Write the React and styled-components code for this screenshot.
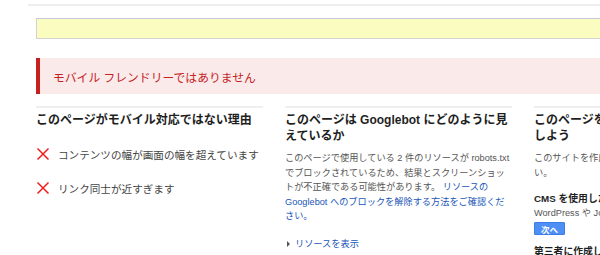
import React from "react";
import styled, { createGlobalStyle } from "styled-components";

const GlobalStyle = createGlobalStyle`
  html, body {
    margin: 0;
    padding: 0;
    overflow: hidden;
    background: #fff;
  }
  body {
    font-family: "Liberation Sans", Arial, "Noto Sans CJK JP", sans-serif;
    color: #222;
  }
`;

const Page = styled.div`
  width: 900px;
  padding-top: 4px;
`;

const TopRule = styled.div`
  margin-left: 28px;
  height: 2px;
  background: #eeeeee;
`;

const Main = styled.div`
  padding-left: 36px;
`;

const Notice = styled.div`
  margin-top: 12px;
  height: 19px;
  background: #fafcc0;
  border: 1px solid #d2d2d2;
  border-top-color: #c6c6dc;
`;

const Banner = styled.div`
  margin-top: 19px;
  height: 36px;
  display: flex;
  align-items: center;
  padding-left: 13px;
  background: #fbeaea;
  border-left: 4px solid #c5221f;
  color: #c5221f;
  font-size: 11.8px;
`;

const Columns = styled.div`
  margin-top: 12px;
  display: grid;
  grid-template-columns: repeat(3, 227px);
  column-gap: 22px;
`;

const Column = styled.section`
  border-top: 2px solid #efefef;
`;

const Heading = styled.h3`
  margin: 4px 0 0;
  font-size: 12px;
  line-height: 16px;
  font-weight: bold;
  color: #1f1f1f;
`;

const IssueList = styled.ul`
  list-style: none;
  margin: 19px 0 0;
  padding: 0;
  display: flex;
  flex-direction: column;
  gap: 20px;
`;

const Issue = styled.li`
  display: flex;
  align-items: center;
  gap: 8px;
  height: 14px;
  font-size: 10.6px;
  color: #444;
  white-space: nowrap;
`;

const Text = styled.p`
  margin: ${(p) => p.$mt || 7}px 0 0;
  font-size: 9.2px;
  line-height: 14.5px;
  color: #555;
`;

const Link = styled.a`
  color: #2156b8;
  text-decoration: none;
`;

const Toggle = styled.div`
  margin-top: 13px;
  display: flex;
  align-items: center;
  gap: 5px;
  padding-left: 2px;
  font-size: 9.2px;
  line-height: 14.5px;
  color: #2156b8;
`;

const Caret = styled.span`
  width: 0;
  height: 0;
  border-top: 3px solid transparent;
  border-bottom: 3px solid transparent;
  border-left: 3px solid #555;
`;

const SubHeading = styled.h4`
  margin: ${(p) => p.$mt || 0}px 0 0;
  font-size: 9.8px;
  line-height: 14px;
  font-weight: bold;
  color: #1f1f1f;
  white-space: nowrap;
`;

const Line = styled.div`
  font-size: 9.2px;
  line-height: 14px;
  color: #555;
  white-space: nowrap;
`;

const Button = styled.button`
  margin-top: 2px;
  width: 31px;
  height: 13px;
  padding: 0;
  display: flex;
  align-items: center;
  justify-content: center;
  background: #4d8ff5;
  border: 1px solid #3d7be6;
  border-radius: 1px;
  color: #fff;
  font-family: inherit;
  font-size: 8.5px;
  font-weight: bold;
`;

const Cross = () => (
  <svg width="14" height="14" viewBox="0 0 14 14">
    <path d="M1.5 1.5 L12.5 12.5 M12.5 1.5 L1.5 12.5" stroke="#f01c1c" strokeWidth="1.5" fill="none" />
  </svg>
);

export default function App() {
  return (
    <Page>
      <GlobalStyle />
      <TopRule />
      <Main>
        <Notice />
        <Banner>モバイル フレンドリーではありません</Banner>
        <Columns>
          <Column>
            <Heading>このページがモバイル対応ではない理由</Heading>
            <IssueList>
              <Issue>
                <Cross />
                コンテンツの幅が画面の幅を超えています
              </Issue>
              <Issue>
                <Cross />
                リンク同士が近すぎます
              </Issue>
            </IssueList>
          </Column>
          <Column>
            <Heading>このページは Googlebot にどのように見えているか</Heading>
            <Text>
              このページで使用している 2 件のリソースが robots.txt
              でブロックされているため、結果とスクリーンショットが不正確である可能性があります。{" "}
              <Link href="#">リソースの Googlebot へのブロックを解除する方法をご確認ください。</Link>
            </Text>
            <Toggle>
              <Caret />
              リソースを表示
            </Toggle>
          </Column>
          <Column>
            <Heading>
              このページをモバイル フレンドリーに
              <br />
              しよう
            </Heading>
            <Text>このサイトを作成した方法に合わせてご確認ください。</Text>
            <SubHeading $mt={12}>CMS を使用した場合</SubHeading>
            <Line>WordPress や Joomla! などの CMS の場合</Line>
            <Button>次へ</Button>
            <SubHeading $mt={10}>第三者に作成してもらった場合</SubHeading>
          </Column>
        </Columns>
      </Main>
    </Page>
  );
}
